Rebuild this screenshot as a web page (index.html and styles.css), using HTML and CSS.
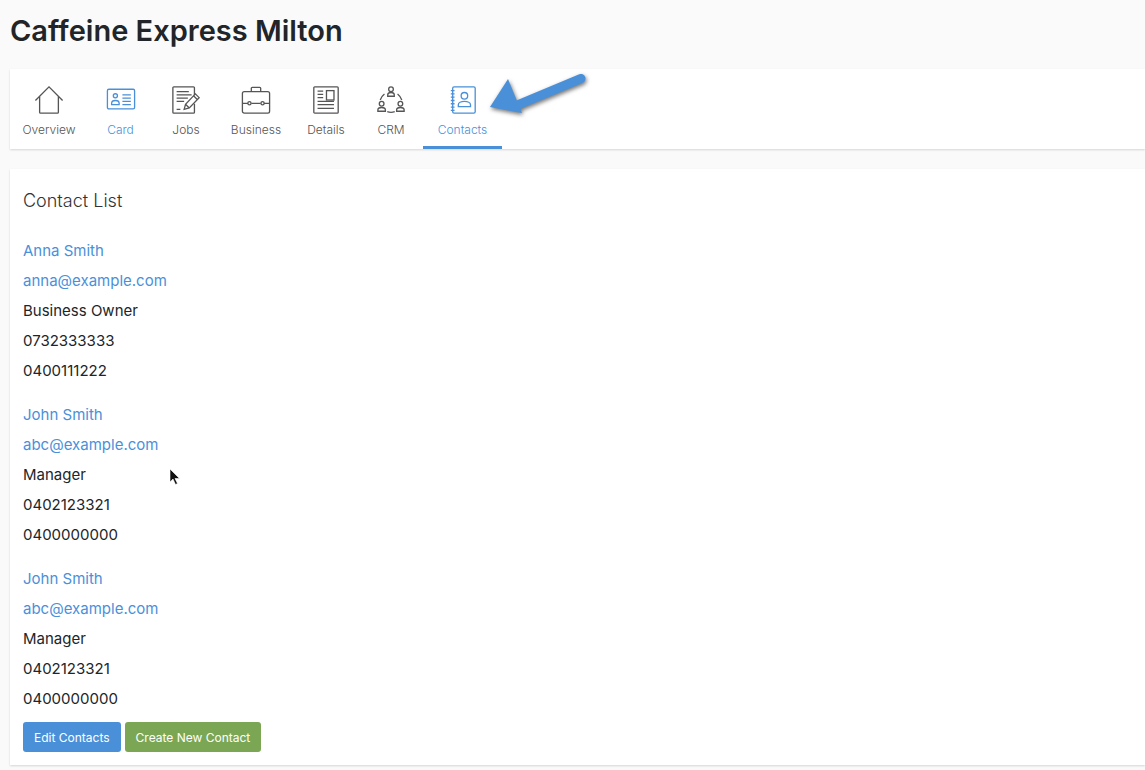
FILE: index.html
```html
<!DOCTYPE html>
<html lang="en">
<head>
  <meta charset="UTF-8">
  <meta name="viewport" content="width=device-width, initial-scale=1.0">
  <title>Caffeine Express Milton</title>
  <link rel="stylesheet" href="styles.css">
</head>
<body>
  <h1 class="page-title">Caffeine Express Milton</h1>

  <nav class="tabs">
    <a class="tab tab-overview" href="#">
      <svg class="tab-icon" viewBox="0 0 32 32"><path d="M1.5 16.5 16 2l14.500 14.500M6 12.500V29a1 1 0 0 0 1 1h18a1 1 0 0 0 1-1V12.500"/></svg>
      <span>Overview</span>
    </a>
    <a class="tab tab-card active-text" href="#">
      <svg class="tab-icon" viewBox="0 0 32 32"><rect x="1.500" y="4.500" width="29" height="21" rx="1.500"/><circle cx="10" cy="11.500" r="2.200"/><path d="M6 21v-1.500c0-2 2-3 4-3s4 1 4 3V21zM17.500 10.500h9M17.500 14h9M17.500 17.500h9M17.500 21h9"/></svg>
      <span>Card</span>
    </a>
    <a class="tab tab-jobs" href="#">
      <svg class="tab-icon" viewBox="0 0 32 32"><path d="M25 11V3a1 1 0 0 0-1-1H3a1 1 0 0 0-1 1v26a1 1 0 0 0 1 1h21a1 1 0 0 0 1-1V20"/><path d="M6 7h13M6 10.500h16M6 14h12M6 17.500h8M6 26h4"/><path d="M14 26l1.500-5.500L26 9.500l4 4L19.500 24.500zM15.500 20.500l4 4M24 11.500l4 4"/></svg>
      <span>Jobs</span>
    </a>
    <a class="tab tab-business" href="#">
      <svg class="tab-icon" viewBox="0 0 32 32"><rect x="1.500" y="7" width="29" height="23" rx="2"/><path d="M11 7V3.500a1 1 0 0 1 1-1h8a1 1 0 0 1 1 1V7M1.500 19.500h6M11 19.500h10M24.500 19.500h6"/><circle cx="9" cy="19.500" r="1.700"/><circle cx="23" cy="19.500" r="1.700"/></svg>
      <span>Business</span>
    </a>
    <a class="tab tab-details" href="#">
      <svg class="tab-icon" viewBox="0 0 32 32"><rect x="3" y="2" width="26" height="28" rx="1"/><rect x="16.500" y="6" width="8" height="10"/><path d="M7 6.500h6M7 10h6M7 13.500h6M7 17.500h17.500M7 21h17.500M7 25h17.500"/></svg>
      <span>Details</span>
    </a>
    <a class="tab tab-crm" href="#">
      <svg class="tab-icon" viewBox="0 0 32 32"><circle cx="16" cy="4.500" r="2.500"/><path d="M12.500 12v-1.500c0-1.500 1.500-2.500 3.500-2.500s3.500 1 3.500 2.500V12z"/><circle cx="6" cy="20" r="2.500"/><path d="M2 28v-1.500C2 25 4 24 6 24s4 1 4 2.500V28z"/><circle cx="26" cy="20" r="2.500"/><path d="M22 28v-1.500c0-1.500 2-2.500 4-2.500s4 1 4 2.500V28z"/><path d="M9 9.500A13 13 0 0 0 4.500 16M23 9.500a13 13 0 0 1 4.500 6.500M12 28.500a13 13 0 0 0 8 0"/></svg>
      <span>CRM</span>
    </a>
    <a class="tab tab-contacts active" href="#">
      <svg class="tab-icon" viewBox="0 0 32 32"><rect x="5" y="2" width="24" height="28" rx="1.500"/><path d="M3 6h4M3 9.500h4M3 13h4M3 16.500h4M3 20h4M3 23.500h4M3 27h4"/><circle cx="17.500" cy="11.500" r="3.500"/><path d="M11 23v-2c0-2 3-3.500 6.500-3.500S24 19 24 21v2z"/></svg>
      <span>Contacts</span>
    </a>
  </nav>

  <main class="panel">
    <h2 class="panel-title">Contact List</h2>

    <div class="contact">
      <a href="#">Anna Smith</a>
      <a href="#">anna@example.com</a>
      <p>Business Owner</p>
      <p>0732333333</p>
      <p>0400111222</p>
    </div>
    <div class="contact">
      <a href="#">John Smith</a>
      <a href="#">abc@example.com</a>
      <p>Manager</p>
      <p>0402123321</p>
      <p>0400000000</p>
    </div>
    <div class="contact">
      <a href="#">John Smith</a>
      <a href="#">abc@example.com</a>
      <p>Manager</p>
      <p>0402123321</p>
      <p>0400000000</p>
    </div>

    <div class="actions">
      <button class="btn btn-blue">Edit Contacts</button>
      <button class="btn btn-green">Create New Contact</button>
    </div>
  </main>

  <!-- annotation drawn over the screenshot -->
  <svg class="arrow" viewBox="0 0 110 60" width="110" height="60">
    <path d="M97 9.500 30 37.500" class="arrow-shaft"/>
    <path d="M24 10 6 38 38 44z" class="arrow-head"/>
  </svg>

  <svg class="pointer" viewBox="0 0 12 18" width="12" height="18">
    <path d="M1 1v13l3-3 2.500 5.500 2-1L6 10.500h4.500z"/>
  </svg>
</body>
</html>
```

FILE: styles.css
```css
body {
  font-family: Inter, "Open Sans", sans-serif;
  margin: 0;
  padding: 0 0 5px 10px;
  background-color: #fafafa;
  color: #212529;
  position: relative;
  overflow: hidden;
}

.page-title {
  margin: 0;
  height: 69px;
  line-height: 62px;
  font-size: 29px;
  font-weight: 600;
  color: #212529;
}

.tabs {
  display: flex;
  height: 80px;
  background: #fff;
  box-shadow: 0 1px 2px rgba(0, 0, 0, 0.15);
}

.tab {
  display: flex;
  flex-direction: column;
  align-items: center;
  box-sizing: border-box;
  padding-top: 16px;
  font-size: 12px;
  font-weight: 300;
  color: #555;
  text-decoration: none;
}

.tab span {
  margin-top: 6px;
  line-height: 18px;
}

.tab-icon {
  width: 30px;
  height: 30px;
  fill: none;
  stroke: #555;
  stroke-width: 1.4;
}

.tab-overview { width: 78px; }
.tab-card { width: 65px; }
.tab-jobs { width: 66px; }
.tab-business { width: 74px; }
.tab-details { width: 66px; }
.tab-crm { width: 64px; }
.tab-contacts { width: 79px; }

.active-text, .active {
  color: #4a90d9;
}

.active-text .tab-icon, .active .tab-icon {
  stroke: #4a90d9;
}

.active {
  border-bottom: 3px solid #4a90d9;
}

.panel {
  margin-top: 20px;
  height: 596px;
  box-sizing: border-box;
  padding: 18px 13px 0;
  background: #fff;
  box-shadow: 0 1px 2px rgba(0, 0, 0, 0.15);
}

.panel-title {
  margin: 0 0 22px;
  font-size: 18px;
  font-weight: 300;
  line-height: 27px;
  color: #333;
}

.contact {
  margin-bottom: 14px;
}

.contact a, .contact p {
  display: block;
  margin: 0;
  font-size: 15px;
  line-height: 30px;
}

.contact a {
  color: #4a90d9;
  text-decoration: none;
}

.actions {
  display: flex;
  gap: 4px;
  margin-top: -6px;
}

.btn {
  height: 30px;
  border: none;
  border-radius: 3px;
  padding: 0 11px;
  font-family: inherit;
  font-size: 12px;
  color: #fff;
}

.btn-blue { background-color: #4a90d9; }
.btn-green { background-color: #7ba755; }

.arrow {
  position: absolute;
  left: 484px;
  top: 69px;
  overflow: visible;
  filter: drop-shadow(1px 2px 2px rgba(0, 0, 0, 0.55));
}

.arrow-shaft {
  stroke: #4a90d9;
  stroke-width: 9;
  stroke-linecap: round;
  fill: none;
}

.arrow-head {
  fill: #4a90d9;
}

.pointer {
  position: absolute;
  left: 169px;
  top: 468px;
}

.pointer path {
  fill: #111;
  stroke: #fff;
  stroke-width: 0.6;
}
```
